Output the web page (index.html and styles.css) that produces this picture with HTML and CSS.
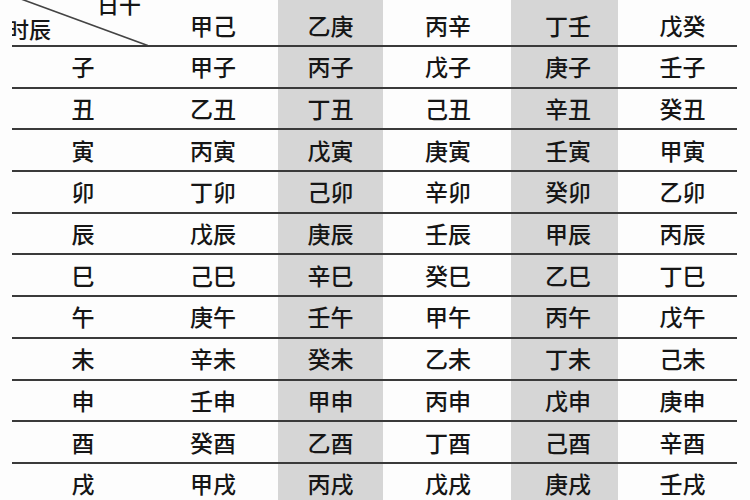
FILE: index.html
```html
<!DOCTYPE html>
<html lang="zh">
<head>
<meta charset="utf-8">
<link rel="stylesheet" href="styles.css">
</head>
<body>
<div class="table">
  <div class="row head">
    <div class="cell corner">
      <svg class="diag" width="140" height="47" viewBox="0 0 140 47"><line x1="9" y1="-1" x2="137" y2="46" stroke="#444" stroke-width="1.6"/></svg>
      <span class="lbl-top">日干</span>
      <span class="lbl-left">时辰</span>
    </div>
    <div class="cell c2">甲己</div>
    <div class="cell c3 shade">乙庚</div>
    <div class="cell c4">丙辛</div>
    <div class="cell c5 shade">丁壬</div>
    <div class="cell c6">戊癸</div>
  </div>
  <div class="row"><div class="cell c1">子</div><div class="cell c2">甲子</div><div class="cell c3 shade">丙子</div><div class="cell c4">戊子</div><div class="cell c5 shade">庚子</div><div class="cell c6">壬子</div></div>
  <div class="row"><div class="cell c1">丑</div><div class="cell c2">乙丑</div><div class="cell c3 shade">丁丑</div><div class="cell c4">己丑</div><div class="cell c5 shade">辛丑</div><div class="cell c6">癸丑</div></div>
  <div class="row"><div class="cell c1">寅</div><div class="cell c2">丙寅</div><div class="cell c3 shade">戊寅</div><div class="cell c4">庚寅</div><div class="cell c5 shade">壬寅</div><div class="cell c6">甲寅</div></div>
  <div class="row"><div class="cell c1">卯</div><div class="cell c2">丁卯</div><div class="cell c3 shade">己卯</div><div class="cell c4">辛卯</div><div class="cell c5 shade">癸卯</div><div class="cell c6">乙卯</div></div>
  <div class="row"><div class="cell c1">辰</div><div class="cell c2">戊辰</div><div class="cell c3 shade">庚辰</div><div class="cell c4">壬辰</div><div class="cell c5 shade">甲辰</div><div class="cell c6">丙辰</div></div>
  <div class="row"><div class="cell c1">巳</div><div class="cell c2">己巳</div><div class="cell c3 shade">辛巳</div><div class="cell c4">癸巳</div><div class="cell c5 shade">乙巳</div><div class="cell c6">丁巳</div></div>
  <div class="row"><div class="cell c1">午</div><div class="cell c2">庚午</div><div class="cell c3 shade">壬午</div><div class="cell c4">甲午</div><div class="cell c5 shade">丙午</div><div class="cell c6">戊午</div></div>
  <div class="row"><div class="cell c1">未</div><div class="cell c2">辛未</div><div class="cell c3 shade">癸未</div><div class="cell c4">乙未</div><div class="cell c5 shade">丁未</div><div class="cell c6">己未</div></div>
  <div class="row"><div class="cell c1">申</div><div class="cell c2">壬申</div><div class="cell c3 shade">甲申</div><div class="cell c4">丙申</div><div class="cell c5 shade">戊申</div><div class="cell c6">庚申</div></div>
  <div class="row"><div class="cell c1">酉</div><div class="cell c2">癸酉</div><div class="cell c3 shade">乙酉</div><div class="cell c4">丁酉</div><div class="cell c5 shade">己酉</div><div class="cell c6">辛酉</div></div>
  <div class="row"><div class="cell c1">戌</div><div class="cell c2">甲戌</div><div class="cell c3 shade">丙戌</div><div class="cell c4">戊戌</div><div class="cell c5 shade">庚戌</div><div class="cell c6">壬戌</div></div>
</div>
</body>
</html>
```
FILE: styles.css
```css
html, body {
  margin: 0;
  padding: 0;
  background: #fdfdfd;
  width: 750px;
  height: 500px;
  overflow: hidden;
}

.table {
  margin-left: 12px;
  width: 725px;
  font-family: "Noto Sans CJK SC", "Noto Sans", sans-serif;
  font-size: 23px;
  font-weight: 500;
  color: #161616;
}

.row {
  display: grid;
  grid-template-columns: 136px 130px 105px 128px 107px 119px;
  height: 39.7px;
  border-bottom: 2px solid #3a3a3a;
}

.row.head {
  height: 45px;
}

.cell {
  display: flex;
  align-items: center;
  justify-content: center;
  line-height: 1;
}

.head .cell {
  padding-top: 6px;
}

.c1 { padding-left: 6px; }
.c4 { padding-left: 2px; }
.c5 { padding-left: 7px; }
.c6 { padding-left: 10px; }

.shade {
  background: #d6d6d6;
}

.corner {
  position: relative;
  overflow: hidden;
  padding: 0 !important;
}

.diag {
  position: absolute;
  left: 0;
  top: 0;
}

.lbl-top {
  position: absolute;
  left: 85px;
  top: -8px;
  font-size: 22px;
}

.lbl-left {
  position: absolute;
  left: -5px;
  top: 17px;
  font-size: 22px;
}
```
